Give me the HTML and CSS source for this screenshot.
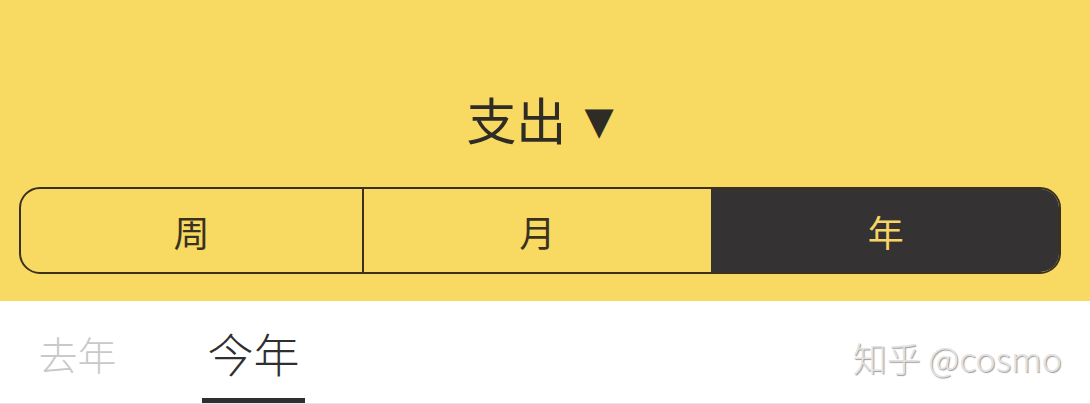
FILE: index.html
```html
<!DOCTYPE html>
<html>
<head>
<meta charset="utf-8">
<link rel="stylesheet" href="styles.css">
</head>
<body>
<div class="page">
  <header class="header">
    <div class="title">支出<span class="caret">▼</span></div>
    <div class="segments">
      <div class="seg seg-first">周</div>
      <div class="seg">月</div>
      <div class="seg seg-active">年</div>
    </div>
  </header>
  <nav class="tabs">
    <div class="tab">去年</div>
    <div class="tab tab-active">今年</div>
    <div class="watermark">知乎 @cosmo</div>
  </nav>
</div>
</body>
</html>
```
FILE: styles.css
```css
html, body {
  margin: 0;
  padding: 0;
  background: #ffffff;
}
body {
  font-family: "Noto Sans CJK SC", "Noto Sans", sans-serif;
}
.page {
  width: 1090px;
  height: 404px;
  overflow: hidden;
}
.header {
  background: #f8d962;
  height: 301px;
  box-sizing: border-box;
  padding: 88px 29px 0 19px;
  display: flex;
  flex-direction: column;
}
.title {
  height: 63px;
  line-height: 60px;
  font-size: 50px;
  color: #2f2c26;
  text-align: center;
  padding-left: 0;
}
.caret {
  font-size: 38px;
  margin-left: 18px;
  position: relative;
  top: -6px;
  font-family: "DejaVu Sans", sans-serif;
  color: #2f2c26;
}
.segments {
  margin-top: 36px;
  height: 87px;
  box-sizing: border-box;
  border: 2px solid #3a3121;
  border-radius: 21px;
  display: flex;
  overflow: hidden;
}
.seg {
  flex: 1;
  display: flex;
  align-items: center;
  justify-content: center;
  font-size: 36px;
  color: #3a3121;
  border-left: 2px solid #3a3121;
}
.seg-first {
  flex: none;
  width: 341px;
  border-left: none;
}
.seg-active {
  background: #343233;
  color: #f6d466;
  border-left-color: #343233;
}
.tabs {
  height: 103px;
  box-sizing: border-box;
  border-bottom: 1px solid #e6e6e6;
  display: flex;
  align-items: stretch;
}
.tab {
  width: 103px;
  display: flex;
  align-items: center;
  justify-content: center;
  font-size: 39px;
  font-weight: 300;
  color: #c9c9c9;
  margin-left: 26px;
  box-sizing: border-box;
  padding-top: 2px;
}
.tab-active {
  margin-left: 73px;
  font-size: 46px;
  color: #2f2f2f;
  border-bottom: 5px solid #2f2f2f;
  padding-top: 4px;
}
.watermark {
  margin-left: auto;
  margin-right: 28px;
  align-self: center;
  font-size: 34px;
  font-weight: 300;
  color: #e2e2e2;
  text-shadow: 1px 1px 1px #9a9a9a;
  padding-top: 10px;
}
```
